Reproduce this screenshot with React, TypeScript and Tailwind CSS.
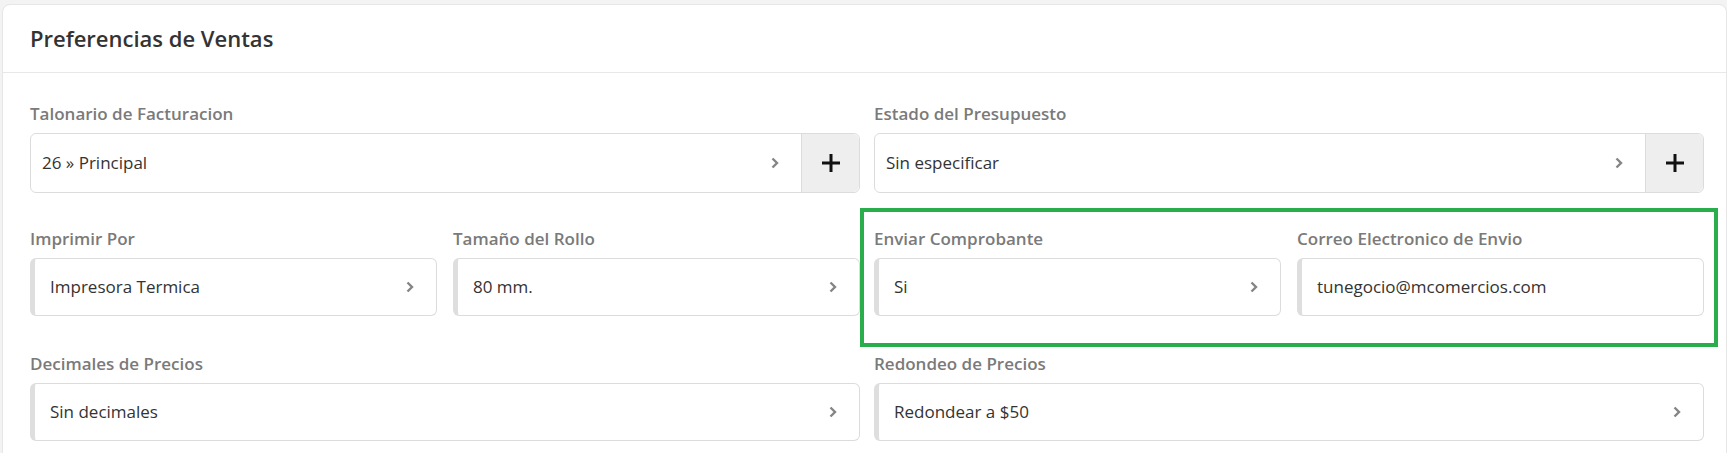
import React from 'react'

interface SelectProps {
  value: string
  withBar?: boolean
  addButton?: boolean
}

function Chevron() {
  return (
    <svg width="8" height="12" viewBox="0 0 8 12" className="flex-shrink-0">
      <polyline points="1.5,1.5 6,6 1.5,10.5" fill="none" stroke="#858585" strokeWidth="2.4" />
    </svg>
  )
}

function PlusIcon() {
  return (
    <svg width="20" height="20" viewBox="0 0 20 20">
      <path d="M10 1v18M1 10h18" stroke="#111" strokeWidth="3" />
    </svg>
  )
}

function SelectField({ value, withBar, addButton }: SelectProps) {
  return (
    <div
      className={`flex items-stretch rounded-[6px] border border-[#dcdcdc] bg-white ${
        withBar ? 'h-[58px] border-l-[5px] border-l-[#dedede]' : 'h-[60px]'
      }`}
    >
      <div className={`flex flex-1 items-center pr-[22px] ${withBar ? 'pl-[15px]' : 'pl-[11px]'}`}>
        <span className="flex-1 truncate text-[17px] text-[#333]">{value}</span>
        <Chevron />
      </div>
      {addButton && (
        <div className="flex w-[58px] items-center justify-center rounded-r-[6px] border-l border-[#dcdcdc] bg-[#eeeeee]">
          <PlusIcon />
        </div>
      )}
    </div>
  )
}

function InputField({ value }: { value: string }) {
  return (
    <div className="flex h-[58px] items-center rounded-[6px] border border-[#dcdcdc] border-l-[5px] border-l-[#dedede] bg-white pl-[15px]">
      <span className="text-[17px] text-[#333]">{value}</span>
    </div>
  )
}

function Label({ children }: { children: React.ReactNode }) {
  return <div className="mb-2 h-[22px] text-[17px] font-semibold leading-[22px] text-[#7a7a7a]">{children}</div>
}

export default function App() {
  return (
    <div
      className="min-h-screen bg-[#f3f3f3] pl-[2px] pt-[4px]"
      style={{ fontFamily: '"Open Sans", "Noto Sans", sans-serif' }}
    >
      <div className="rounded-t-[8px] border border-[#e6e6e6] bg-white">
        {/* header */}
        <div className="flex h-[68px] items-center border-b border-[#e8e8e8] pl-[27px]">
          <h2 className="text-[22px] font-semibold text-[#333]">Preferencias de Ventas</h2>
        </div>

        {/* body */}
        <div className="pb-10 pl-[27px] pr-[22px] pt-[30px]">
          <div className="grid grid-cols-2 gap-x-[14px] gap-y-[35px]">
            <div>
              <Label>Talonario de Facturacion</Label>
              <SelectField value="26 » Principal" addButton />
            </div>
            <div>
              <Label>Estado del Presupuesto</Label>
              <SelectField value="Sin especificar" addButton />
            </div>

            <div className="grid grid-cols-2 gap-x-4">
              <div>
                <Label>Imprimir Por</Label>
                <SelectField value="Impresora Termica" withBar />
              </div>
              <div>
                <Label>Tamaño del Rollo</Label>
                <SelectField value="80 mm." withBar />
              </div>
            </div>

            <div className="relative grid grid-cols-2 gap-x-4">
              {/* highlight frame */}
              <div className="pointer-events-none absolute -bottom-[31px] -left-[14px] -right-[14px] -top-[20px] border-4 border-[#2aad4b]" />
              <div>
                <Label>Enviar Comprobante</Label>
                <SelectField value="Si" withBar />
              </div>
              <div>
                <Label>Correo Electronico de Envio</Label>
                <InputField value="tunegocio@mcomercios.com" />
              </div>
            </div>

            <div className="mt-[2px]">
              <Label>Decimales de Precios</Label>
              <SelectField value="Sin decimales" withBar />
            </div>
            <div className="mt-[2px]">
              <Label>Redondeo de Precios</Label>
              <SelectField value="Redondear a $50" withBar />
            </div>
          </div>
        </div>
      </div>
    </div>
  )
}
